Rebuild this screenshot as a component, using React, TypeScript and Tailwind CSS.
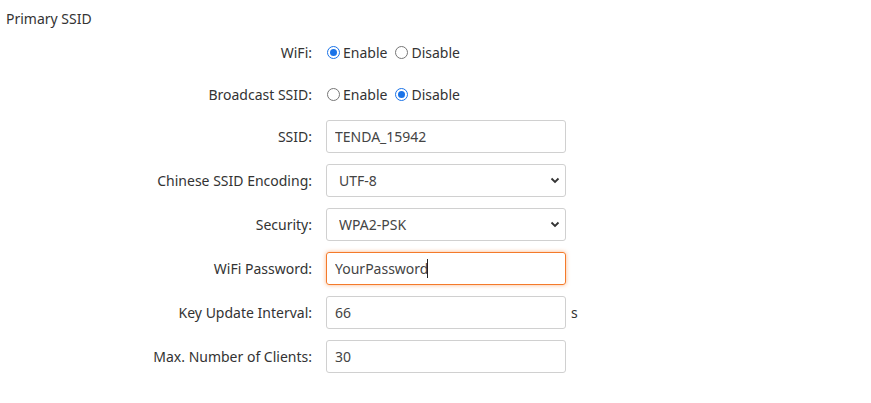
import React from "react";

const font = { fontFamily: '"Noto Sans", "Open Sans", sans-serif' };

function Label({ children }: { children: React.ReactNode }) {
  return (
    <div className="w-[312px] shrink-0 text-right pr-0">{children}</div>
  );
}

function Radio({ checked }: { checked: boolean }) {
  return checked ? (
    <span className="w-[13px] h-[13px] rounded-full border-[1.5px] border-[#1a73e8] flex items-center justify-center shrink-0">
      <span className="w-[7px] h-[7px] rounded-full bg-[#1a73e8]" />
    </span>
  ) : (
    <span className="block w-[13px] h-[13px] rounded-full border border-[#767676] shrink-0" />
  );
}

function RadioRow({ label, enabled }: { label: string; enabled: boolean }) {
  return (
    <div className="flex items-center h-[33px]">
      <Label>{label}</Label>
      <div className="flex items-center ml-[15px]">
        <Radio checked={enabled} />
        <span className="ml-[3px]">Enable</span>
        <span className="ml-[8px] flex">
          <Radio checked={!enabled} />
        </span>
        <span className="ml-[3px]">Disable</span>
      </div>
    </div>
  );
}

function Chevron() {
  return (
    <svg
      width="10"
      height="7"
      viewBox="0 0 10 7"
      className="absolute right-[6px] top-[13px] pointer-events-none"
    >
      <path d="M1.5 1.5 L5 5 L8.5 1.5" fill="none" stroke="#333" strokeWidth="1.8" />
    </svg>
  );
}

export default function App() {
  return (
    <div className="w-[871px] h-[403px] bg-white text-[14px] text-[#333]" style={font}>
      <div className="pl-[6px] pt-[9px] leading-[20px]">Primary SSID</div>
      <div className="mt-[7px]">
        <RadioRow label="WiFi:" enabled={true} />
        <div className="mt-[9px]">
          <RadioRow label="Broadcast SSID:" enabled={false} />
        </div>
        <div className="mt-[9px] flex flex-col gap-[11px]">
          <div className="flex items-center h-[33px]">
            <Label>SSID:</Label>
            <input
              readOnly
              value="TENDA_15942"
              className="ml-[14px] w-[240px] h-[33px] border border-[#d0d0d0] rounded-[3px] pl-[8px] text-[#444] outline-none"
            />
          </div>
          <div className="flex items-center h-[33px]">
            <Label>Chinese SSID Encoding:</Label>
            <div className="ml-[14px] w-[240px] h-[33px] relative">
              <select
                defaultValue="UTF-8"
                className="appearance-none w-full h-full border border-[#d0d0d0] rounded-[3px] pl-[12px] text-[#444] bg-white outline-none"
              >
                <option>UTF-8</option>
                <option>GB2312</option>
              </select>
              <Chevron />
            </div>
          </div>
          <div className="flex items-center h-[33px]">
            <Label>Security:</Label>
            <div className="ml-[14px] w-[240px] h-[33px] relative">
              <select
                defaultValue="WPA2-PSK"
                className="appearance-none w-full h-full border border-[#d0d0d0] rounded-[3px] pl-[12px] text-[#444] bg-white outline-none"
              >
                <option>None</option>
                <option>WPA2-PSK</option>
              </select>
              <Chevron />
            </div>
          </div>
          <div className="flex items-center h-[33px]">
            <Label>WiFi Password:</Label>
            <div className="ml-[14px] w-[240px] h-[33px] relative">
              <input
                readOnly
                value="YourPassword"
                className="w-full h-full border border-[#f47a2a] rounded-[3px] pl-[8px] text-[#444] outline-none shadow-[0_0_4px_rgba(244,122,42,0.55)]"
              />
              <span className="absolute left-[101px] top-[7px] w-[1px] h-[19px] bg-[#222]" />
            </div>
          </div>
          <div className="flex items-center h-[33px]">
            <Label>Key Update Interval:</Label>
            <input
              readOnly
              value="66"
              className="ml-[14px] w-[240px] h-[33px] border border-[#d0d0d0] rounded-[3px] pl-[8px] text-[#444] outline-none"
            />
            <span className="ml-[5px]">s</span>
          </div>
          <div className="flex items-center h-[33px]">
            <Label>Max. Number of Clients:</Label>
            <input
              readOnly
              value="30"
              className="ml-[14px] w-[240px] h-[33px] border border-[#d0d0d0] rounded-[3px] pl-[8px] text-[#444] outline-none"
            />
          </div>
        </div>
      </div>
    </div>
  );
}
